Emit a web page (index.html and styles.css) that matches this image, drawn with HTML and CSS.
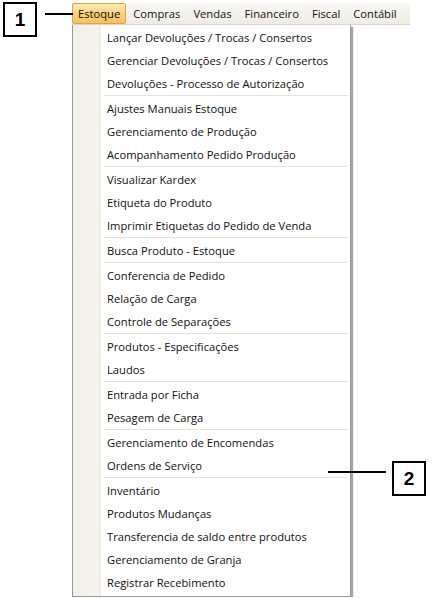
FILE: index.html
```html
<!DOCTYPE html>
<html lang="pt-BR">
<head>
    <meta charset="UTF-8">
    <meta name="viewport" content="width=device-width, initial-scale=1.0">
    <title>Menu Estoque</title>
    <link rel="stylesheet" href="styles.css">
</head>
<body>
    <div class="app">
        <div class="menubar">
            <span class="top active">Estoque</span>
            <span class="top">Compras</span>
            <span class="top">Vendas</span>
            <span class="top">Financeiro</span>
            <span class="top">Fiscal</span>
            <span class="top">Contábil</span>
        </div>
        <div class="dropdown">
            <div class="item">Lançar Devoluções / Trocas / Consertos</div>
            <div class="item">Gerenciar Devoluções / Trocas / Consertos</div>
            <div class="item">Devoluções - Processo de Autorização</div>
            <div class="sep"></div>
            <div class="item">Ajustes Manuais Estoque</div>
            <div class="item">Gerenciamento de Produção</div>
            <div class="item">Acompanhamento Pedido Produção</div>
            <div class="sep"></div>
            <div class="item">Visualizar Kardex</div>
            <div class="item">Etiqueta do Produto</div>
            <div class="item">Imprimir Etiquetas do Pedido de Venda</div>
            <div class="sep"></div>
            <div class="item">Busca Produto - Estoque</div>
            <div class="sep"></div>
            <div class="item">Conferencia de Pedido</div>
            <div class="item">Relação de Carga</div>
            <div class="item">Controle de Separações</div>
            <div class="sep"></div>
            <div class="item">Produtos - Especificações</div>
            <div class="item">Laudos</div>
            <div class="sep"></div>
            <div class="item">Entrada por Ficha</div>
            <div class="item">Pesagem de Carga</div>
            <div class="sep"></div>
            <div class="item">Gerenciamento de Encomendas</div>
            <div class="item">Ordens de Serviço</div>
            <div class="sep"></div>
            <div class="item">Inventário</div>
            <div class="item">Produtos Mudanças</div>
            <div class="item">Transferencia de saldo entre produtos</div>
            <div class="item">Gerenciamento de Granja</div>
            <div class="item">Registrar Recebimento</div>
        </div>
    </div>

    <!-- callouts -->
    <div class="callout callout-1">1</div>
    <div class="leader leader-1"></div>
    <div class="callout callout-2">2</div>
    <div class="leader leader-2"></div>
</body>
</html>
```

FILE: styles.css
```css
body {
    margin: 0;
    background: #fff;
    font-family: 'Open Sans', 'Noto Sans', sans-serif;
    font-size: 11.2px;
    color: #111;
}
.app {
    padding: 3px 0 0 72px;
}
.menubar {
    width: 338px;
    height: 22px;
    display: flex;
    align-items: stretch;
    background: linear-gradient(#f9f8f4, #efece3);
    border-bottom: 1px solid #d8d4c8;
    box-sizing: border-box;
}
.top {
    display: flex;
    align-items: center;
    padding: 0 6px;
    margin-right: 1px;
}
.top.active {
    background: linear-gradient(#fdeeb5, #f9cf74 55%, #f7c160);
    border: 1px solid #e2a23f;
    border-radius: 2px;
    padding: 0 5px;
}
.dropdown {
    width: 279px;
    box-sizing: border-box;
    border: 1px solid #979797;
    border-top: none;
    padding: 1px 1px 2px 1px;
    background: linear-gradient(90deg, #f1efe6 0, #f5f4ef 26px, #e2e0d6 27px, #fff 28px, #fff 100%);
    box-shadow: 2px 2px 1px rgba(0, 0, 0, 0.35);
}
.item {
    height: 23px;
    line-height: 23px;
    padding-left: 33px;
    white-space: nowrap;
}
.sep {
    height: 1px;
    margin: 0 1px 1px 30px;
    background: #e4e1d6;
}
.callout {
    position: absolute;
    width: 30px;
    height: 31px;
    border: 2px solid #000;
    font-family: 'Liberation Sans', Arial, sans-serif;
    font-weight: bold;
    font-size: 19px;
    color: #000;
    display: flex;
    align-items: center;
    justify-content: center;
    background: #fff;
}
.callout-1 {
    left: 3px;
    top: 2px;
}
.callout-2 {
    left: 392px;
    top: 461px;
}
.leader {
    position: absolute;
    height: 2px;
    background: #000;
}
.leader-1 {
    left: 45px;
    top: 13px;
    width: 28px;
}
.leader-2 {
    left: 328px;
    top: 471px;
    width: 58px;
}
```
